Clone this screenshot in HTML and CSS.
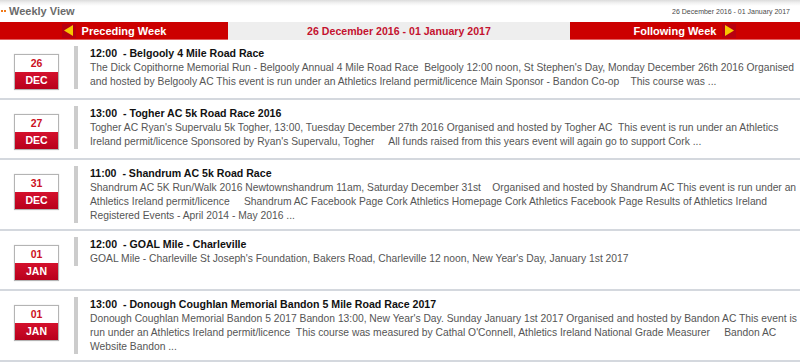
FILE: index.html
```html
<!DOCTYPE html>
<html lang="en">
<head>
    <meta charset="UTF-8">
    <meta name="viewport" content="width=device-width, initial-scale=1.0">
    <title>Weekly View</title>
    <link rel="stylesheet" href="styles.css">
</head>
<body>
    <div class="top">
        <h1 class="view-title"><span class="dots"></span>Weekly View</h1>
        <span class="range">26 December 2016 - 01 January 2017</span>
    </div>

    <div class="week-nav">
        <a class="nav-btn" href="#">
            <span class="arrow"><svg width="9" height="11" viewBox="0 0 9 11"><polygon points="9,0 9,11 0,5.5" fill="#f7c600"/></svg></span>
            Preceding Week
        </a>
        <div class="nav-current">26 December 2016 - 01 January 2017</div>
        <a class="nav-btn" href="#">
            Following Week
            <span class="arrow"><svg width="9" height="11" viewBox="0 0 9 11"><polygon points="0,0 0,11 9,5.5" fill="#f7c600"/></svg></span>
        </a>
    </div>

    <ul class="events">
        <li class="event">
            <div class="date-box"><span class="day">26</span><span class="month">DEC</span></div>
            <div class="event-body">
                <div class="event-title">12:00&nbsp; - Belgooly 4 Mile Road Race</div>
                <div class="event-text">The Dick Copithorne Memorial Run - Belgooly Annual 4 Mile Road Race&nbsp; Belgooly 12:00 noon, St Stephen's Day, Monday December 26th 2016 Organised and hosted by Belgooly AC This event is run under an Athletics Ireland permit/licence Main Sponsor - Bandon Co-op &nbsp;&nbsp; This course was ...</div>
            </div>
        </li>
        <li class="event">
            <div class="date-box"><span class="day">27</span><span class="month">DEC</span></div>
            <div class="event-body">
                <div class="event-title">13:00&nbsp; - Togher AC 5k Road Race 2016</div>
                <div class="event-text">Togher AC Ryan's Supervalu 5k Togher, 13:00, Tuesday December 27th 2016 Organised and hosted by Togher AC&nbsp; This event is run under an Athletics Ireland permit/licence Sponsored by Ryan's Supervalu, Togher &nbsp;&nbsp;&nbsp; All funds raised from this years event will again go to support Cork ...</div>
            </div>
        </li>
        <li class="event">
            <div class="date-box"><span class="day">31</span><span class="month">DEC</span></div>
            <div class="event-body">
                <div class="event-title">11:00&nbsp; - Shandrum AC 5k Road Race</div>
                <div class="event-text">Shandrum AC 5K Run/Walk 2016 Newtownshandrum 11am, Saturday December 31st &nbsp;&nbsp; Organised and hosted by Shandrum AC This event is run under an Athletics Ireland permit/licence &nbsp;&nbsp;&nbsp; Shandrum AC Facebook Page Cork Athletics Homepage Cork Athletics Facebook Page Results of Athletics Ireland Registered Events - April 2014 - May 2016 ...</div>
            </div>
        </li>
        <li class="event">
            <div class="date-box"><span class="day">01</span><span class="month">JAN</span></div>
            <div class="event-body">
                <div class="event-title">12:00&nbsp; - GOAL Mile - Charleville</div>
                <div class="event-text">GOAL Mile - Charleville St Joseph's Foundation, Bakers Road, Charleville 12 noon, New Year's Day, January 1st 2017</div>
            </div>
        </li>
        <li class="event">
            <div class="date-box"><span class="day">01</span><span class="month">JAN</span></div>
            <div class="event-body">
                <div class="event-title">13:00&nbsp; - Donough Coughlan Memorial Bandon 5 Mile Road Race 2017</div>
                <div class="event-text">Donough Coughlan Memorial Bandon 5 2017 Bandon 13:00, New Year's Day. Sunday January 1st 2017 Organised and hosted by Bandon AC This event is run under an Athletics Ireland permit/licence&nbsp; This course was measured by Cathal O'Connell, Athletics Ireland National Grade Measurer &nbsp;&nbsp;&nbsp; Bandon AC Website Bandon ...</div>
            </div>
        </li>
    </ul>
</body>
</html>
```

FILE: styles.css
```css
body {
    font-family: "Liberation Sans", Arial, sans-serif;
    margin: 0;
    background-color: #ffffff;
    color: #555555;
}

.top {
    display: flex;
    align-items: center;
    justify-content: space-between;
    height: 22px;
    padding: 0 10px 0 0;
    background: linear-gradient(#dcdcdc 0, #f2f2f2 3px, #ffffff 6px);
}

.view-title {
    display: flex;
    align-items: center;
    margin: 0;
    font-size: 11px;
    color: #6b6b6b;
}

.dots {
    width: 2px;
    height: 2px;
    margin: 0 6px 0 1px;
    background-color: #f07a1a;
    box-shadow: 3px 0 0 #f07a1a;
}

.range {
    font-size: 7px;
    color: #4a4a4a;
}

.week-nav {
    display: grid;
    grid-template-columns: 228px 1fr 230px;
    height: 18px;
    background-color: #eeeeee;
}

.nav-btn {
    display: flex;
    align-items: center;
    justify-content: center;
    gap: 6px;
    background-color: #cc0000;
    color: #ffffff;
    font-size: 11px;
    font-weight: bold;
    text-decoration: none;
    border-bottom: 1px solid #e06060;
}

.arrow {
    display: flex;
    align-items: center;
    justify-content: center;
    width: 14px;
    height: 14px;
    background-color: #b80010;
}

.nav-current {
    display: flex;
    align-items: center;
    justify-content: center;
    color: #c4122f;
    font-size: 10.6px;
    font-weight: bold;
}

.events {
    list-style: none;
    margin: 0;
    padding: 0;
}

.event {
    display: flex;
    align-items: flex-start;
    padding: 6px 0;
    border-bottom: 2px solid #d4d8de;
}

.date-box {
    display: flex;
    flex-direction: column;
    width: 43px;
    margin: 8px 15px 2px 14px;
    border: 1px solid #b4b4b4;
    box-shadow: 0 0 1px #cccccc;
    font-size: 10.5px;
    font-weight: bold;
    text-align: center;
}

.day {
    height: 17px;
    line-height: 17px;
    color: #cc1122;
    background-color: #ffffff;
}

.month {
    height: 17px;
    line-height: 17px;
    color: #ffffff;
    background: linear-gradient(#d4102c, #b8001c);
}

.event-body {
    flex: 1;
    padding-left: 12px;
    border-left: 4px solid #cccccc;
}

.event-title {
    font-size: 10.6px;
    line-height: 15px;
    font-weight: bold;
    color: #111111;
}

.event-text {
    font-size: 10.3px;
    line-height: 14px;
}
```
